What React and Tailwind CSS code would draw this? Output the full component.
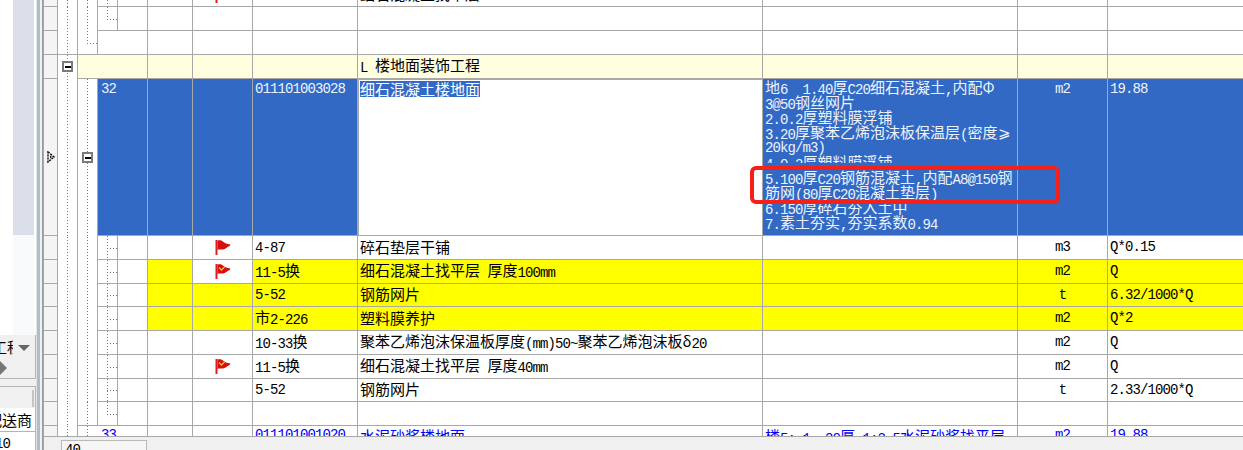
import React from "react";

const LINE = "border-[#a8a8a8]";
const WIDE = /([\u4e00-\u9fff⩾δΦ]+)/;

// CJK glyphs are full width at 15px, latin half width at 7.5px
const Txt = ({ children }) =>
  String(children ?? "")
    .split(WIDE)
    .filter(Boolean)
    .map((part, i) =>
      WIDE.test(part) ? (
        <span key={i} className="font-['Noto_Sans_CJK_SC',sans-serif] text-[15px] leading-[15px] align-[1px]">
          {part}
        </span>
      ) : (
        <span key={i} className="font-['Liberation_Mono',monospace] text-[14px] tracking-[-0.9px] leading-[15px] whitespace-pre">
          {part}
        </span>
      )
    );

const Cell = ({ w, bg = "bg-white", noBottom, noRight, className = "", children }) => (
  <div
    className={`${w} ${bg} shrink-0 ${noBottom ? "" : "border-b"} ${noRight ? "" : "border-r"} ${LINE} flex items-center overflow-hidden whitespace-nowrap leading-[15px] ${className}`}
  >
    {children}
  </div>
);

// dotted tree connectors: v = straight, t = with stub, l = corner
const Tree = ({ kind = "v", h, x = 9, w = 19 }) => {
  const mid = Math.round(h / 2);
  return (
    <svg width={w} height={h} className="block shrink-0">
      <line x1={x + 0.5} y1={0} x2={x + 0.5} y2={kind === "l" ? mid : h} stroke="#777" strokeDasharray="1 2" />
      {kind !== "v" && <line x1={x} y1={mid + 0.5} x2={w} y2={mid + 0.5} stroke="#777" strokeDasharray="1 2" />}
    </svg>
  );
};

const Flag = ({ check, className = "" }) => (
  <svg width="16" height="15" viewBox="0 0 16 15" className={`block ${className}`}>
    <path d="M0.500 0h2v15h-2z" fill="#d81e1e" />
    <path d="M2.500 0.500C5 -0.300 7 0.300 8.500 2c1.500 1.300 3.500 1.800 6 2.300 1 .3 1 1.200 0 1.600C12 7 10.500 9 8 9.500 6 9.800 4.500 9 2.500 10z" fill="#d90f0f" />
    {check && <path d="M4 3.500 6.500 6 9.500 3" fill="none" stroke="#f0c020" strokeWidth="1.300" />}
  </svg>
);

const Minus = ({ className }) => (
  <div className={`absolute w-[11px] h-[11px] border-2 border-[#7a7a7a] bg-white flex items-center justify-center ${className}`}>
    <div className="w-[6px] h-[2px] bg-black" />
  </div>
);

const Head = ({ bottom = true }) => (
  <Cell w="w-[15px]" bg="bg-[#f4f4f4]" noBottom={!bottom} className="border-l" />
);

const Row = ({ h, children }) => <div className={`flex shrink-0 ${h}`}>{children}</div>;

const SubRow = ({ h, px, code, name, unit, formula, seqBg = "bg-white", flagBg = "bg-white", restBg = "bg-white", flag, check, last }) => (
  <Row h={h}>
    <Head />
    <Cell w="w-[20px]" noBottom><Tree h={px} /></Cell>
    <Cell w="w-[20px]" noBottom={!last}><Tree h={px} /></Cell>
    <Cell w="w-[20px]"><Tree h={px} kind={last ? "l" : "t"} /></Cell>
    <Cell w="w-[30px]" />
    <Cell w="w-[45px]" bg={seqBg} />
    <Cell w="w-[60px]" bg={flagBg} className="pl-[22px]">{flag && <Flag check={check} />}</Cell>
    <Cell w="w-[105px]" bg={restBg} className="pl-[2px] pb-[1px]"><span><Txt>{code}</Txt></span></Cell>
    <Cell w="w-[405px]" bg={restBg} className="pl-[2px] pb-[1px]"><span><Txt>{name}</Txt></span></Cell>
    <Cell w="w-[255px]" bg={restBg} />
    <Cell w="w-[90px]" bg={restBg} className="justify-center"><Txt>{unit}</Txt></Cell>
    <Cell w="flex-1" bg={restBg} noRight className="pl-[2px]"><Txt>{formula}</Txt></Cell>
  </Row>
);

const DESC = [
  "地6  1.40厚C20细石混凝土,内配Φ",
  "3@50钢丝网片",
  "2.0.2厚塑料膜浮铺",
  "3.20厚聚苯乙烯泡沫板保温层(密度⩾",
  "20kg/m3)",
  "4.0.2厚塑料膜浮铺",
  "5.100厚C20钢筋混凝土,内配A8@150钢",
  "筋网(80厚C20混凝土垫层)",
  "6.150厚碎石夯入土中",
  "7.素土夯实,夯实系数0.94",
];

const Y = "bg-[#ffff00]";
const BLUE = "bg-[#3169c4]";

const Sidebar = () => (
  <div className="w-[36px] shrink-0 flex flex-col h-full bg-white overflow-hidden">
    <div className="h-[235px] shrink-0 pl-[13px] pr-[2px]"><div className="h-full bg-[#d9dee8]" /></div>
    <div className="h-[100px] shrink-0 pl-[13px] pr-[2px]"><div className="h-full bg-[#f8f9fb]" /></div>
    <div className="h-[44px] shrink-0 bg-[#f0f0f0] border-b border-r border-[#b5b5b5] relative">
      <div className="flex items-center h-[20px] mt-[1px] w-[13px] overflow-hidden leading-none">
        <span className="font-['Noto_Sans_CJK_SC',sans-serif] text-[15px] ml-[-8px] shrink-0 whitespace-nowrap text-black">工程</span>
      </div>
      <div className="absolute left-[18px] top-[10px] w-0 h-0 border-x-[6px] border-x-transparent border-t-[6px] border-t-[#666]" />
      <div className="absolute left-0 top-[26px] w-0 h-0 border-y-[7px] border-y-transparent border-l-[7px] border-l-[#777]" />
    </div>
    <div className="h-[7px] shrink-0 bg-[#f0f0f0]" />
    <div className="flex-1 bg-[#f0f0f0] border-t border-r border-[#b5b5b5] flex flex-col">
      <div className="h-[21px] shrink-0 flex justify-end pr-[1px] pt-[3px]">
        <div className="w-[2px] h-[17px] bg-[#c4c4c4]" />
      </div>
      <div className="h-[24px] shrink-0 bg-white border-b border-[#b5b5b5] flex justify-end items-center pr-[3px] overflow-hidden whitespace-nowrap">
        <span className="font-['Noto_Sans_CJK_SC',sans-serif] text-[15px] leading-[15px] text-black">配送商</span>
      </div>
      <div className="flex-1 bg-white overflow-hidden pt-[2px] leading-none">
        <span className="font-['Liberation_Mono',monospace] text-[14px] tracking-[-0.9px] ml-[-5px] inline-block text-black">10</span>
      </div>
    </div>
  </div>
);

const Splitter = () => (
  <div className="w-[7px] shrink-0 flex h-full">
    <div className="w-[1px] bg-[#e4e4e4]" />
    <div className="w-[3px] bg-[#a9bfc9]" />
    <div className="w-[2px] bg-[#eef2f4]" />
    <div className="w-[1px] bg-[#9a9a9a]" />
  </div>
);

export default function App() {
  return (
    <div className="relative w-[1243px] h-[450px] flex overflow-hidden bg-white text-black">
      <Sidebar />
      <Splitter />
      <div className="flex-1 flex flex-col h-full min-w-0">
        {/* clipped row at the top */}
        <Row h="h-[7px]">
          <Head />
          <Cell w="w-[20px]" noBottom><Tree h={7} /></Cell>
          <Cell w="w-[20px]" noBottom><Tree h={7} /></Cell>
          <Cell w="w-[20px]"><Tree h={7} /></Cell>
          <Cell w="w-[30px]" />
          <Cell w="w-[45px]" />
          <Cell w="w-[60px]" className="pl-[22px] items-end"><Flag className="mb-[3px]" /></Cell>
          <Cell w="w-[105px]" className="pl-[2px] items-end"><span className="mb-[3px]"><Txt>11-5换</Txt></span></Cell>
          <Cell w="w-[405px]" className="pl-[2px] items-end"><span className="mb-[3px]"><Txt>细石混凝土找平层</Txt></span></Cell>
          <Cell w="w-[255px]" />
          <Cell w="w-[90px]" />
          <Cell w="flex-1" noRight />
        </Row>

        <Row h="h-[24px]">
          <Head />
          <Cell w="w-[20px]" noBottom><Tree h={24} /></Cell>
          <Cell w="w-[20px]" noBottom><Tree h={24} /></Cell>
          <Cell w="w-[20px]"><Tree h={23} kind="l" /></Cell>
          <Cell w="w-[30px]" />
          <Cell w="w-[45px]" />
          <Cell w="w-[60px]" />
          <Cell w="w-[105px]" />
          <Cell w="w-[405px]" />
          <Cell w="w-[255px]" />
          <Cell w="w-[90px]" />
          <Cell w="flex-1" noRight />
        </Row>

        <Row h="h-[24px]">
          <Head />
          <Cell w="w-[20px]"><Tree h={23} /></Cell>
          <Cell w="w-[20px]"><Tree h={23} kind="l" /></Cell>
          <Cell w="w-[50px]" />
          <Cell w="w-[45px]" />
          <Cell w="w-[60px]" />
          <Cell w="w-[105px]" />
          <Cell w="w-[405px]" />
          <Cell w="w-[255px]" />
          <Cell w="w-[90px]" />
          <Cell w="flex-1" noRight />
        </Row>

        {/* group row */}
        <Row h="h-[24px]">
          <Head />
          <Cell w="w-[20px]" noBottom className="relative">
            <Tree h={24} />
            <Minus className="left-[4px] top-[6px]" />
          </Cell>
          <Cell w="w-[70px]" bg="bg-[#ffffe0]" />
          <Cell w="w-[45px]" bg="bg-[#ffffe0]" />
          <Cell w="w-[60px]" bg="bg-[#ffffe0]" />
          <Cell w="w-[105px]" bg="bg-[#ffffe0]" />
          <Cell w="w-[405px]" bg="bg-[#ffffe0]" className="pl-[2px] pb-[1px]"><span><Txt>L 楼地面装饰工程</Txt></span></Cell>
          <Cell w="w-[255px]" bg="bg-[#ffffe0]" />
          <Cell w="w-[90px]" bg="bg-[#ffffe0]" />
          <Cell w="flex-1" bg="bg-[#ffffe0]" noRight />
        </Row>

        {/* selected row */}
        <Row h="h-[157px]">
          <Cell w="w-[15px]" bg="bg-[#f4f4f4]" className="border-l relative">
            <svg width="9" height="12" viewBox="0 0 9 12" className="absolute left-[3px] top-[72px]">
              <path d="M1 1 7 6 1 11z" fill="none" stroke="#111" strokeWidth="1.500" strokeDasharray="2 1" />
              <path d="M3 4.500 5 6 3 7.500z" fill="#111" />
            </svg>
          </Cell>
          <Cell w="w-[20px]" noBottom><Tree h={157} /></Cell>
          <Cell w="w-[20px]" noBottom className="relative">
            <Tree h={157} />
            <Minus className="left-[4px] top-[73px]" />
          </Cell>
          <Cell w="w-[50px]" bg={BLUE} className="items-start pl-[3px] pt-[3px] text-[#eef3fb]"><Txt>32</Txt></Cell>
          <Cell w="w-[45px]" bg={BLUE} />
          <Cell w="w-[60px]" bg={BLUE} />
          <Cell w="w-[105px]" bg={BLUE} className="items-start pl-[2px] pt-[3px] text-[#eef3fb]"><Txt>011101003028</Txt></Cell>
          <Cell w="w-[405px]" className="items-start border-[1.500px] border-[#5c86c9]">
            <span className="bg-[#3169c4] text-white ml-[1px] mt-[1px] h-[16px] inline-block"><Txt>细石混凝土楼地面</Txt></span>
          </Cell>
          <Cell w="w-[255px]" bg={BLUE} className="flex-col items-start pl-[2px] text-[#eef3fb]">
            {DESC.map((line, i) => (
              <div key={i} className="h-[15px] shrink-0 overflow-visible">
                <div className={i === 5 ? "h-[9px] overflow-hidden" : ""}><Txt>{line}</Txt></div>
              </div>
            ))}
          </Cell>
          <Cell w="w-[90px]" bg={BLUE} className="items-start justify-center pt-[3px] text-[#eef3fb]"><Txt>m2</Txt></Cell>
          <Cell w="flex-1" bg={BLUE} noRight className="items-start pl-[2px] pt-[3px] text-[#eef3fb]"><Txt>19.88</Txt></Cell>
        </Row>

        <SubRow h="h-[24px]" px={23} code="4-87" name="碎石垫层干铺" unit="m3" formula="Q*0.15" flag />
        <SubRow h="h-[24px]" px={23} seqBg={Y} restBg={Y} flag check code="11-5换" name="细石混凝土找平层 厚度100mm" unit="m2" formula="Q" />
        <SubRow h="h-[23px]" px={22} seqBg={Y} flagBg={Y} restBg={Y} code="5-52" name="钢筋网片" unit="t" formula="6.32/1000*Q" />
        <SubRow h="h-[24px]" px={23} seqBg={Y} flagBg={Y} restBg={Y} code="市2-226" name="塑料膜养护" unit="m2" formula="Q*2" />
        <SubRow h="h-[24px]" px={23} code="10-33换" name="聚苯乙烯泡沫保温板厚度(mm)50~聚苯乙烯泡沫板δ20" unit="m2" formula="Q" />
        <SubRow h="h-[24px]" px={23} flag check code="11-5换" name="细石混凝土找平层 厚度40mm" unit="m2" formula="Q" />
        <SubRow h="h-[23px]" px={22} code="5-52" name="钢筋网片" unit="t" formula="2.33/1000*Q" />
        <SubRow h="h-[24px]" px={23} last />

        {/* next item, cut by the bottom bar */}
        <Row h="h-[10px]">
          <Head bottom={false} />
          <Cell w="w-[20px]" noBottom><Tree h={10} /></Cell>
          <Cell w="w-[20px]" noBottom noRight><Tree h={10} /></Cell>
          <Cell w="w-[50px]" noBottom className="items-start pl-[3px] pt-[2px] text-[#0000ff]"><Txt>33</Txt></Cell>
          <Cell w="w-[45px]" noBottom />
          <Cell w="w-[60px]" noBottom />
          <Cell w="w-[105px]" noBottom className="items-start pl-[2px] pt-[2px] text-[#0000ff]"><Txt>011101001020</Txt></Cell>
          <Cell w="w-[405px]" noBottom className="items-start pl-[2px] pt-[2px] text-[#0000ff]"><span><Txt>水泥砂浆楼地面</Txt></span></Cell>
          <Cell w="w-[255px]" noBottom className="items-start pl-[2px] pt-[2px] text-[#0000ff]"><span><Txt>楼5: 1. 20厚 1:2.5水泥砂浆找平层</Txt></span></Cell>
          <Cell w="w-[90px]" noBottom className="items-start justify-center pt-[2px] text-[#0000ff]"><Txt>m2</Txt></Cell>
          <Cell w="flex-1" noBottom noRight className="items-start pl-[2px] pt-[2px] text-[#0000ff]"><Txt>19.88</Txt></Cell>
        </Row>

        {/* bottom bar */}
        <div className="flex-1 bg-[#f0f0f0] border-t border-l border-[#a8a8a8] pl-[17px] pt-[3px] overflow-hidden">
          <div className="w-[86px] h-[20px] border border-[#b8b8b8] bg-[#f6f6f6] pl-[3px] leading-[15px]">
            <Txt>40</Txt>
          </div>
        </div>
      </div>

      {/* red annotation box */}
      <div className="absolute left-[750px] top-[166px] w-[310px] h-[38px] border-[4px] border-[#f5201a] rounded-[6px]" />
    </div>
  );
}
